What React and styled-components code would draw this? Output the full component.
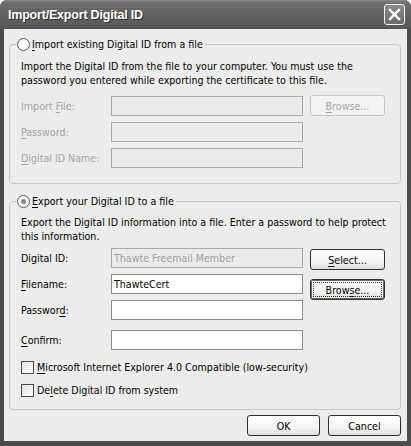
import React from "react";
import styled, { createGlobalStyle } from "styled-components";

const Global = createGlobalStyle`
  html, body { margin: 0; padding: 0; background: #ffffff; }
  body { font-family: "DejaVu Sans Condensed", "Liberation Sans", Arial, sans-serif; font-size: 10.6px; color: #000; }
  * { box-sizing: border-box; }
`;

const Window = styled.div`
  width: 411px;
  height: 446px;
  display: flex;
  flex-direction: column;
  background: #4c4c4c;
  border-radius: 7px 7px 0 0;
  overflow: hidden;
`;

const TitleBar = styled.div`
  height: 29px;
  flex: none;
  display: flex;
  align-items: center;
  justify-content: space-between;
  padding: 0 6px 0 8px;
  background: linear-gradient(to bottom, #8c8c8c 0px, #727272 2px, #666666 8px, #626262 16px, #5c5c5c 24px, #555555 29px);
`;

const Title = styled.div`
  color: #ffffff;
  font-family: "Liberation Sans", Arial, sans-serif;
  font-weight: bold;
  font-size: 12.5px;
  letter-spacing: -0.2px;
  text-shadow: 1px 1px 0 #2e2e2e;
`;

const CloseButton = styled.div`
  width: 21px;
  height: 21px;
  border: 1px solid #f2f2f2;
  border-radius: 3px;
  background: linear-gradient(to bottom, #8a8a8a, #6a6a6a);
  display: flex;
  align-items: center;
  justify-content: center;
`;

const Client = styled.div`
  flex: 1;
  margin: 0 4px 5px 4px;
  background: #ececec;
  padding: 7px 6px 0 5px;
  display: flex;
  flex-direction: column;
`;

const Group = styled.fieldset`
  margin: ${(p) => (p.$second ? "9px 0 0 0" : "0")};
  padding: 0 10px ${(p) => p.$bottom}px 11px;
  border: 1px solid #c6c6c6;
  border-radius: 4px;
  min-width: 0;
`;

const Legend = styled.legend`
  margin-left: -5px;
  padding: 0 2px 0 1px;
  height: 16px;
  display: flex;
  align-items: center;
  gap: 2px;
  line-height: 16px;
`;

const Radio = styled.span`
  width: 13px;
  height: 13px;
  border-radius: 50%;
  border: 1px solid #5a5a5a;
  background: radial-gradient(circle at 60% 60%, #ffffff 40%, #e2e2e2 100%);
  display: inline-flex;
  align-items: center;
  justify-content: center;
  flex: none;
  &::after {
    content: "";
    width: 5px;
    height: 5px;
    border-radius: 50%;
    background: ${(p) => (p.$checked ? "#8a8a8a" : "transparent")};
  }
`;

const Desc = styled.p`
  margin: ${(p) => p.$top}px 0 0 0;
  line-height: 14px;
`;

const FormGrid = styled.div`
  margin-top: ${(p) => p.$top}px;
  display: grid;
  grid-template-columns: 83px 192px 75px;
  grid-template-rows: ${(p) => p.$rows};
  column-gap: 7px;
  row-gap: 6px;
  align-items: end;
`;

const Label = styled.span`
  line-height: 20px;
  color: ${(p) => (p.$disabled ? "#a3a3a3" : "#000")};
  white-space: nowrap;
`;

const TextBox = styled.div`
  height: 20px;
  border: 1px solid ${(p) => (p.$disabled ? "#a8a8a8" : "#8c8c8c")};
  background: ${(p) => (p.$disabled ? "#ebebeb" : "#ffffff")};
  color: ${(p) => (p.$disabled ? "#a0a0a0" : "#000")};
  padding: 0 2px;
  line-height: 18px;
  white-space: nowrap;
  overflow: hidden;
  grid-column: 2;
`;

const Button = styled.div`
  height: 21px;
  width: ${(p) => p.$w || 75}px;
  align-self: start;
  margin-top: ${(p) => p.$dy || 0}px;
  border: 1px solid ${(p) => (p.$disabled ? "#c4c4c4" : "#303030")};
  border-radius: 3px;
  background: ${(p) =>
    p.$disabled ? "#f3f3f3" : "linear-gradient(to bottom, #ffffff 0%, #f4f4f4 60%, #dedede 100%)"};
  color: ${(p) => (p.$disabled ? "#a3a3a3" : "#000")};
  display: flex;
  align-items: center;
  justify-content: center;
  position: relative;
  box-shadow: ${(p) => (p.$focus ? "inset 0 0 0 1px #6a6a6a" : "none")};
  &::after {
    content: "";
    display: ${(p) => (p.$focus ? "block" : "none")};
    position: absolute;
    inset: 2px;
    border: 1px dotted #303030;
  }
`;

const Checks = styled.div`
  margin-top: 9px;
  display: flex;
  flex-direction: column;
  gap: 7px;
`;

const CheckRow = styled.div`
  height: 16px;
  display: flex;
  align-items: center;
  gap: 3px;
`;

const CheckBox = styled.span`
  width: 13px;
  height: 13px;
  border: 1px solid #4a4a4a;
  background: linear-gradient(135deg, #e2e2e2, #ffffff);
  flex: none;
`;

const Footer = styled.div`
  margin-top: 5px;
  display: flex;
  justify-content: flex-end;
  gap: 8px;
`;

const U = styled.span`
  text-decoration: underline;
  text-underline-offset: 2px;
`;

export default function App() {
  return (
    <>
      <Global />
      <Window>
        <TitleBar>
          <Title>Import/Export Digital ID</Title>
          <CloseButton>
            <svg width="13" height="13" viewBox="0 0 13 13">
              <path d="M2 2 L11 11 M11 2 L2 11" stroke="#ffffff" strokeWidth="2.4" strokeLinecap="square" />
            </svg>
          </CloseButton>
        </TitleBar>
        <Client>
          <Group $bottom={15}>
            <Legend>
              <Radio />
              <span><U>I</U>mport existing Digital ID from a file</span>
            </Legend>
            <Desc $top={7}>
              Import the Digital ID from the file to your computer. You must use the password you entered while exporting the certificate to this file.
            </Desc>
            <FormGrid $top={9} $rows="20px 20px 20px">
              <Label $disabled>Import <U>F</U>ile:</Label>
              <TextBox $disabled />
              <Button $disabled $dy={-1}><span><U>B</U>rowse...</span></Button>
              <Label $disabled><U>P</U>assword:</Label>
              <TextBox $disabled />
              <span />
              <Label $disabled><U>D</U>igital ID Name:</Label>
              <TextBox $disabled />
            </FormGrid>
          </Group>
          <Group $second $bottom={11}>
            <Legend>
              <Radio $checked />
              <span><U>E</U>xport your Digital ID to a file</span>
            </Legend>
            <Desc $top={6}>
              Export the Digital ID information into a file. Enter a password to help protect this information.
            </Desc>
            <FormGrid $top={5} $rows="20px 20px 20px 24px">
              <Label>Digital ID:</Label>
              <TextBox $disabled>Thawte Freemail Member</TextBox>
              <Button $dy={1}><span><U>S</U>elect...</span></Button>
              <Label><U>F</U>ilename:</Label>
              <TextBox>ThawteCert</TextBox>
              <Button $dy={5} $focus><span>Brow<U>s</U>e...</span></Button>
              <Label>Passwor<U>d</U>:</Label>
              <TextBox />
              <span />
              <Label><U>C</U>onfirm:</Label>
              <TextBox />
            </FormGrid>
            <Checks>
              <CheckRow>
                <CheckBox />
                <span><U>M</U>icrosoft Internet Explorer 4.0 Compatible (low-security)</span>
              </CheckRow>
              <CheckRow>
                <CheckBox />
                <span>De<U>l</U>ete Digital ID from system</span>
              </CheckRow>
            </Checks>
          </Group>
          <Footer>
            <Button $w={73}>OK</Button>
            <Button $w={73}>Cancel</Button>
          </Footer>
        </Client>
      </Window>
    </>
  );
}
